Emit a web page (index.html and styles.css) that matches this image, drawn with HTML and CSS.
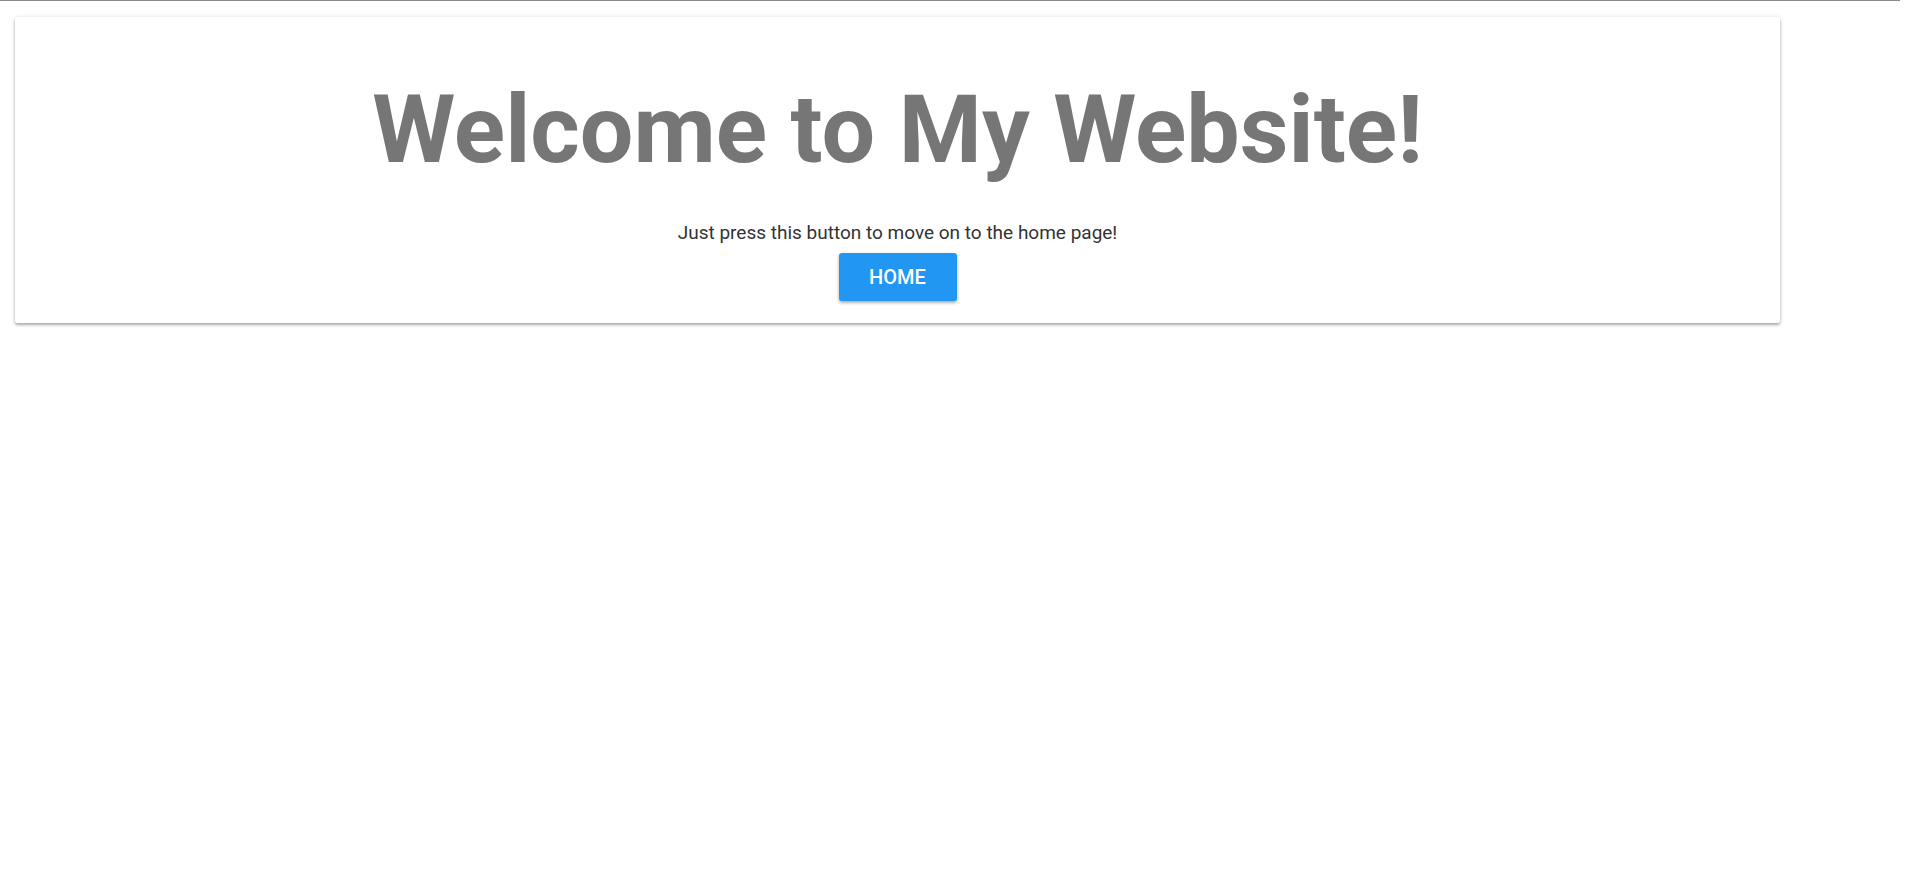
FILE: index.html
```html
<!DOCTYPE html>
<html lang="en">
<head>
    <meta charset="UTF-8">
    <meta name="viewport" content="width=device-width, initial-scale=1.0">
    <title>Welcome</title>
    <link rel="stylesheet" href="styles.css">
</head>
<body>
    <div class="topline"></div>
    <div class="card">
        <h1>Welcome to My Website!</h1>
        <p>Just press this button to move on to the home page!</p>
        <a class="btn" href="#">HOME</a>
    </div>
</body>
</html>
```

FILE: styles.css
```css
html {
    background: #fff;
}

body {
    margin: 0;
    padding: 0 0 40px;
    min-height: 100vh;
    box-sizing: border-box;
    background: #fff;
    font-family: Roboto, "Liberation Sans", sans-serif;
}

a {
    text-decoration: none;
}

.topline {
    width: 1900px;
    height: 0;
    border-top: 1px solid #8c8c8c;
}

.card {
    width: 1765px;
    margin: 16px 0 0 15px;
    padding: 56px 0 22px;
    box-sizing: border-box;
    background: #fff;
    text-align: center;
    border-radius: 2px;
    box-shadow: 0 2px 3px 0 rgba(0, 0, 0, 0.3), 0 0 5px 0 rgba(0, 0, 0, 0.1);
}

h1 {
    margin: 0 0 32px;
    font-size: 95px;
    line-height: 1.2;
    font-weight: 700;
    color: #767676;
}

p {
    margin: 0 0 5px;
    font-size: 19px;
    line-height: 1.5;
    color: #333;
}

.btn {
    display: inline-block;
    width: 118px;
    height: 48px;
    line-height: 48px;
    background: #2196f3;
    color: #fff;
    font-size: 20px;
    font-weight: 500;
    border-radius: 3px;
    box-shadow: 0 2px 3px 0 rgba(0, 0, 0, 0.25), 0 1px 4px 0 rgba(0, 0, 0, 0.12);
}
```
